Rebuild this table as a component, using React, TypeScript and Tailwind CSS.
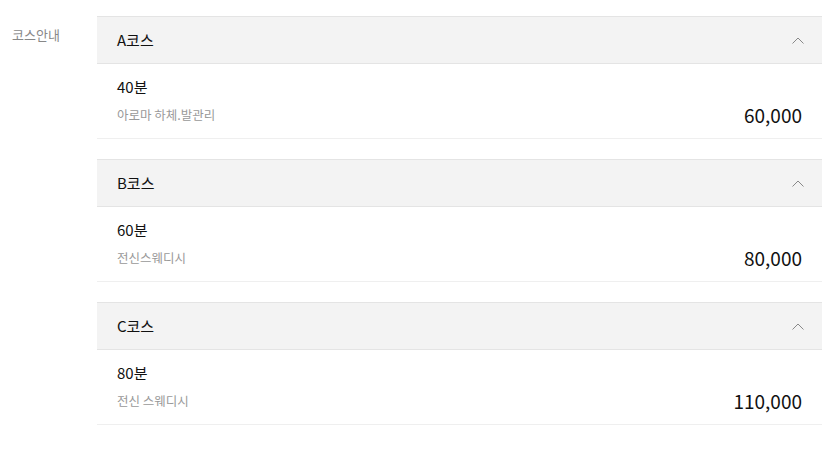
import React from "react";

const courses = [
  { name: "A코스", time: "40분", desc: "아로마 하체.발관리", price: "60,000" },
  { name: "B코스", time: "60분", desc: "전신스웨디시", price: "80,000" },
  { name: "C코스", time: "80분", desc: "전신 스웨디시", price: "110,000" },
];

function ChevronUp() {
  return (
    <svg width="12" height="7" viewBox="0 0 12 7" fill="none" className="text-[#888]">
      <path d="M0.5 6.5 L6 1 L11.5 6.5" stroke="currentColor" strokeWidth="1" />
    </svg>
  );
}

export default function App() {
  return (
    <div
      className="min-h-screen bg-white flex pt-4"
      style={{ fontFamily: '"Noto Sans CJK KR", "Noto Sans", sans-serif' }}
    >
      <div className="w-[97px] shrink-0 pl-3 pt-[9px] text-[13px] text-[#888]">코스안내</div>

      <div className="w-[725px] flex flex-col gap-5">
        {courses.map((c) => (
          <div key={c.name}>
            <div className="h-12 flex items-center justify-between bg-[#f3f3f3] border-y border-[#e4e4e4] pl-5 pr-[18px]">
              <span className="text-[15px] text-[#111]">{c.name}</span>
              <ChevronUp />
            </div>
            <div className="h-[75px] border-b border-[#efefef] pl-5 pr-5 pt-3 flex justify-between">
              <div className="flex flex-col">
                <span className="text-[15px] text-[#111] leading-[22px]">{c.time}</span>
                <span className="text-[12.5px] text-[#999] leading-[20px] mt-[7px]">{c.desc}</span>
              </div>
              <span className="text-[19px] text-[#111] leading-[28px] self-end mb-[9px]">{c.price}</span>
            </div>
          </div>
        ))}
      </div>
    </div>
  );
}
